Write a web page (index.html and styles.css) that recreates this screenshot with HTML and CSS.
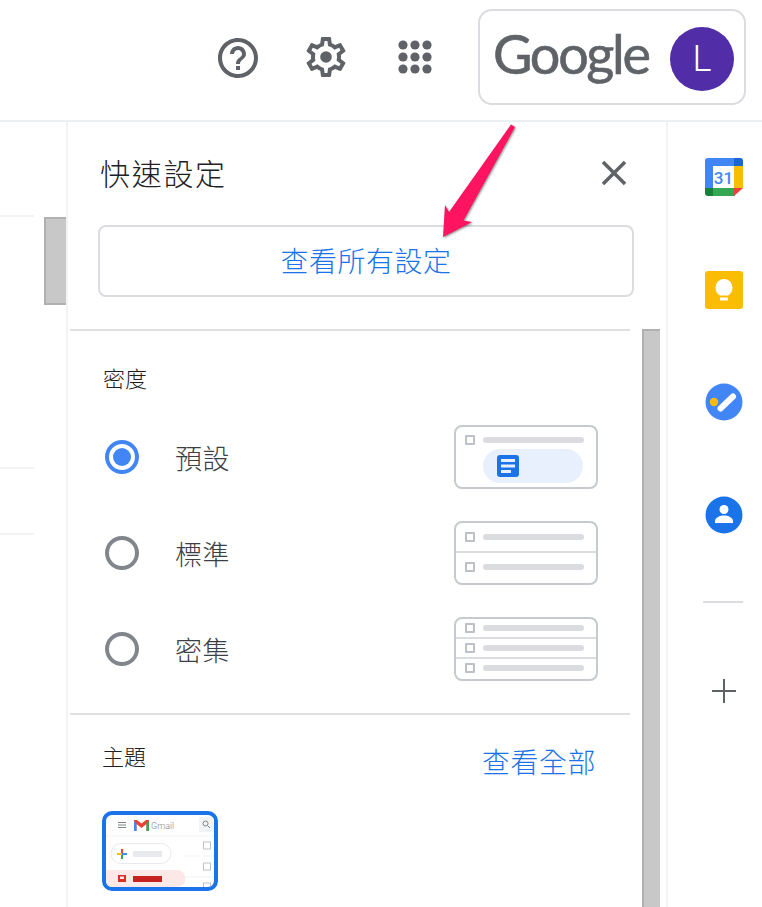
FILE: index.html
```html
<!DOCTYPE html>
<html lang="zh-Hant">
  <head>
    <meta charset="utf-8">
    <title>Gmail 快速設定</title>
    <link rel="stylesheet" href="styles.css">
  </head>

  <body>
    <header class="topbar">
      <svg class="icon-help" viewBox="0 0 24 24"><path d="M11 18h2v-2h-2v2zm1-16C6.48 2 2 6.48 2 12s4.48 10 10 10 10-4.48 10-10S17.52 2 12 2zm0 18c-4.41 0-8-3.59-8-8s3.59-8 8-8 8 3.59 8 8-3.59 8-8 8zm0-14c-2.21 0-4 1.79-4 4h2c0-1.1.9-2 2-2s2 .9 2 2c0 2-3 1.75-3 5h2c0-2.25 3-2.5 3-5 0-2.21-1.79-4-4-4z"/></svg>
      <svg class="icon-gear" viewBox="0 0 24 24"><path d="M19.43 12.98c.04-.32.07-.64.07-.98 0-.34-.03-.66-.07-.98l2.11-1.65c.19-.15.24-.42.12-.64l-2-3.46c-.09-.16-.26-.25-.44-.25-.06 0-.12.01-.17.03l-2.49 1c-.52-.4-1.08-.73-1.69-.98l-.38-2.65C14.46 2.18 14.25 2 14 2h-4c-.25 0-.46.18-.49.42l-.38 2.65c-.61.25-1.17.59-1.69.98l-2.49-1c-.06-.02-.12-.03-.18-.03-.17 0-.34.09-.43.25l-2 3.46c-.13.22-.07.49.12.64l2.11 1.65c-.04.32-.07.65-.07.98 0 .33.03.66.07.98l-2.11 1.65c-.19.15-.24.42-.12.64l2 3.46c.09.16.26.25.44.25.06 0 .12-.01.17-.03l2.49-1c.52.4 1.08.73 1.69.98l.38 2.65c.03.24.24.42.49.42h4c.25 0 .46-.18.49-.42l.38-2.65c.61-.25 1.17-.59 1.69-.98l2.49 1c.06.02.12.03.18.03.17 0 .34-.09.43-.25l2-3.46c.12-.22.07-.49-.12-.64l-2.11-1.65zm-1.98-1.71c.04.31.05.52.05.73 0 .21-.02.43-.05.73l-.14 1.13.89.7 1.08.84-.7 1.21-1.27-.51-1.04-.42-.9.68c-.43.32-.84.56-1.25.73l-1.06.43-.16 1.13-.2 1.35h-1.4l-.19-1.35-.16-1.13-1.06-.43c-.43-.18-.83-.41-1.23-.71l-.91-.7-1.06.43-1.27.51-.7-1.21 1.08-.84.89-.7-.14-1.13c-.03-.31-.05-.54-.05-.74s.02-.43.05-.73l.14-1.13-.89-.7-1.08-.84.7-1.21 1.27.51 1.04.42.9-.68c.43-.32.84-.56 1.25-.73l1.06-.43.16-1.13.2-1.35h1.39l.19 1.35.16 1.13 1.06.43c.43.18.83.41 1.23.71l.91.7 1.06-.43 1.27-.51.7 1.21-1.07.85-.89.7.14 1.13z"/><circle cx="12" cy="12" r="2.9"/></svg>
      <svg class="icon-apps" viewBox="0 0 34 34">
        <circle cx="5" cy="5" r="4.6"/><circle cx="17" cy="5" r="4.6"/><circle cx="29" cy="5" r="4.6"/>
        <circle cx="5" cy="17" r="4.6"/><circle cx="17" cy="17" r="4.6"/><circle cx="29" cy="17" r="4.6"/>
        <circle cx="5" cy="29" r="4.6"/><circle cx="17" cy="29" r="4.6"/><circle cx="29" cy="29" r="4.6"/>
      </svg>
      <div class="account">
        <span class="google-word">Google</span>
        <span class="avatar">L</span>
      </div>
    </header>

    <main class="layout">
      <div class="mail-edge">
        <div class="mail-lines">
          <div class="mail-line first"></div>
          <div class="mail-line second"></div>
          <div class="mail-line third"></div>
        </div>
        <div class="mail-thumb"></div>
      </div>

      <section class="panel">
        <div class="panel-head">
          <div class="panel-title-row">
            <h2 class="panel-title">快速設定</h2>
            <svg class="icon-close" viewBox="0 0 24 24"><path d="M19 6.41 17.59 5 12 10.59 6.41 5 5 6.41 10.59 12 5 17.59 6.41 19 12 13.41 17.59 19 19 17.59 13.41 12z"/></svg>
          </div>
          <button class="all-settings">查看所有設定</button>
        </div>

        <div class="panel-scroll">
          <div class="panel-content">
            <div class="section density">
              <h3 class="section-label">密度</h3>

              <div class="density-row">
                <span class="radio checked"></span>
                <span class="density-name">預設</span>
                <div class="density-thumb">
                  <div class="thumb-row top-row"><span class="check"></span><span class="bar"></span></div>
                  <div class="thumb-pill">
                    <svg class="icon-doc" viewBox="0 0 22 22"><rect width="22" height="22" rx="3" fill="#1a73e8"/><path d="M4 4h14v3H4zM4 9.500h14v3H4zM4 15h10v3H4z" fill="#e8f0fe"/></svg>
                  </div>
                </div>
              </div>

              <div class="density-row">
                <span class="radio"></span>
                <span class="density-name">標準</span>
                <div class="density-thumb">
                  <div class="thumb-row"><span class="check"></span><span class="bar"></span></div>
                  <div class="thumb-row"><span class="check"></span><span class="bar"></span></div>
                </div>
              </div>

              <div class="density-row">
                <span class="radio"></span>
                <span class="density-name">密集</span>
                <div class="density-thumb">
                  <div class="thumb-row"><span class="check"></span><span class="bar"></span></div>
                  <div class="thumb-row"><span class="check"></span><span class="bar"></span></div>
                  <div class="thumb-row"><span class="check"></span><span class="bar"></span></div>
                </div>
              </div>
            </div>

            <div class="section theme">
              <div class="theme-head">
                <h3 class="section-label">主題</h3>
                <span class="view-all">查看全部</span>
              </div>
              <svg class="theme-thumb" viewBox="0 0 108 72">
                <path d="M12 7.500h8M12 10h8M12 12.500h8" stroke="#80868b" stroke-width="1.200" fill="none"/>
                <path d="M28 5h3l4.500 3.500L40 5h3v11h-2.500V9L35.500 13 30.500 9v7H28z" fill="#ea4335"/>
                <path d="M28 6v10h2.500V8z" fill="#4285f4"/>
                <path d="M43 6v10h-2.500V8z" fill="#34a853"/>
                <text class="thumb-word" x="45" y="14">Gmail</text>
                <rect x="93" y="2" width="15" height="15" fill="#f1f3f4"/>
                <circle cx="99.500" cy="8.500" r="2.500" fill="none" stroke="#80868b"/>
                <path d="M101.500 10.500l2.500 2.500" stroke="#80868b"/>
                <path d="M0 21h108" stroke="#f1f3f4"/>
                <rect x="5" y="28.500" width="60" height="20" rx="10" fill="#fff" stroke="#e8eaed"/>
                <path d="M16 34v5" stroke="#ea4335" stroke-width="2"/>
                <path d="M16 39v5" stroke="#34a853" stroke-width="2"/>
                <path d="M11 39h5" stroke="#fbbc04" stroke-width="2"/>
                <path d="M16 39h5" stroke="#4285f4" stroke-width="2"/>
                <rect x="27" y="36" width="29" height="6" fill="#e8eaed"/>
                <path d="M0 55h71a8.500 8.500 0 0 1 0 17H0z" fill="#fce8e6"/>
                <rect x="12" y="60" width="8" height="7" fill="#d93025"/>
                <rect x="14" y="61.500" width="4" height="2.500" fill="#fce8e6"/>
                <rect x="27" y="61" width="29" height="6" fill="#c5221f"/>
                <rect x="97.500" y="27" width="7" height="7" fill="none" stroke="#bdc1c6"/>
                <rect x="97.500" y="48" width="7" height="7" fill="none" stroke="#bdc1c6"/>
                <rect x="97.500" y="68" width="7" height="7" fill="none" stroke="#bdc1c6"/>
                <path d="M78 41h30M78 62h30" stroke="#f1f3f4"/>
              </svg>
            </div>
          </div>
          <div class="panel-scrollbar"></div>
        </div>
      </section>

      <aside class="side-rail">
        <svg class="rail-icon" viewBox="0 0 38 38">
          <path d="M3 0h27v8H8v22H0V3a3 3 0 0 1 3-3z" fill="#4285f4"/>
          <path d="M29 0h6a3 3 0 0 1 3 3v5h-9z" fill="#1967d2"/>
          <rect x="29" y="8" width="9" height="22" fill="#fbbc04"/>
          <rect x="8" y="30" width="22" height="8" fill="#34a853"/>
          <path d="M0 30h8v8H3a3 3 0 0 1-3-3z" fill="#188038"/>
          <path d="M29 30h9l-9 8z" fill="#ea4335"/>
          <rect x="8" y="8" width="21" height="22" fill="#fff"/>
          <text class="cal-day" x="18.500" y="26">31</text>
        </svg>
        <svg class="rail-icon" viewBox="0 0 38 38">
          <rect width="38" height="38" rx="3" fill="#fbbc04"/>
          <path d="M15 24.500c-2.800-1.400-4.500-4.300-4.500-8a8.500 8.500 0 0 1 17 0c0 3.700-1.700 6.600-4.500 8z" fill="#fff"/>
          <rect x="15" y="26.500" width="8" height="3" fill="#fff"/>
        </svg>
        <svg class="rail-icon" viewBox="0 0 38 38">
          <circle cx="19" cy="19" r="18.500" fill="#4285f4"/>
          <path d="M15.500 25.500 28 13.500" stroke="#fff" stroke-width="6" stroke-linecap="round"/>
          <circle cx="9" cy="19" r="4.200" fill="#fbbc04"/>
        </svg>
        <svg class="rail-icon" viewBox="0 0 38 38">
          <circle cx="19" cy="19" r="18.500" fill="#1a73e8"/>
          <circle cx="19" cy="13.500" r="4.500" fill="#fff"/>
          <path d="M10 27v-2c0-3.500 5-5.500 9-5.500s9 2 9 5.500v2z" fill="#fff"/>
        </svg>
        <div class="rail-divider"></div>
        <svg class="icon-plus" viewBox="0 0 24 24"><path d="M0 11h11V0h2v11h11v2H13v11h-2V13H0z"/></svg>
      </aside>
    </main>

    <svg class="arrow" viewBox="0 0 762 907"><path d="M511 124.500 515 127 463.500 220.500 472 222 443 237 445 205 449 212z"/></svg>
  </body>
</html>
```

FILE: styles.css
```css
* {
  box-sizing: border-box;
}
body {
  margin: 0;
  width: 762px;
  height: 907px;
  overflow: hidden;
  position: relative;
  background: white;
  font-family: "Noto Sans CJK TC", "Liberation Sans", sans-serif;
  font-weight: 300;
  color: #3c4043;
}
svg {
  display: block;
  flex: none;
}

/* top bar */
.topbar {
  height: 122px;
  border-bottom: 2px solid #eceff1;
  display: flex;
  align-items: flex-start;
  padding: 9px 16px 0 0;
  justify-content: flex-end;
  fill: #5f6368;
}
.icon-help {
  width: 48px;
  height: 48px;
  margin-top: 25px;
}
.icon-gear {
  width: 48px;
  height: 48px;
  margin: 24px 2px 0 40px;
}
.icon-apps {
  width: 34px;
  height: 34px;
  margin: 31px 0 0 46px;
}
.account {
  width: 268px;
  height: 96px;
  margin-left: 46px;
  border: 2px solid #dadce0;
  border-radius: 14px;
  display: flex;
  align-items: center;
  padding: 4px 10px 0 13px;
  justify-content: space-between;
}
.google-word {
  font-family: "Lato", sans-serif;
  font-size: 54px;
  font-weight: 400;
  letter-spacing: -2.3px;
  -webkit-text-stroke: 0.6px #5f6368;
  color: #5f6368;
  line-height: 1;
  margin-top: -10px;
}
.avatar {
  width: 64px;
  height: 64px;
  border-radius: 50%;
  background: #512da8;
  color: white;
  font-family: "Roboto", sans-serif;
  font-size: 36px;
  font-weight: 300;
  display: flex;
  align-items: center;
  justify-content: center;
}

/* main area */
.layout {
  display: flex;
  height: 785px;
}
.mail-edge {
  width: 68px;
  border-right: 2px solid #f1f3f4;
  display: flex;
}
.mail-lines {
  width: 34px;
}
.mail-line {
  height: 2px;
  background: #f1f3f4;
}
.mail-line.first {
  margin-top: 93px;
}
.mail-line.second {
  margin-top: 250px;
}
.mail-line.third {
  margin-top: 64px;
}
.mail-thumb {
  width: 22px;
  height: 88px;
  margin: 95px 0 0 10px;
  background: #c8c8c8;
  border: 2px solid #b0b0b0;
  border-right: none;
}

/* quick settings panel */
.panel {
  width: 600px;
  border-right: 2px solid #f1f3f4;
  display: flex;
  flex-direction: column;
}
.panel-head {
  height: 207px;
  padding: 0 32px 0 30px;
}
.panel-title-row {
  display: flex;
  align-items: center;
  justify-content: space-between;
  height: 103px;
}
.panel-title {
  margin: -3px 0 0 2px;
  font-size: 30px;
  font-weight: 300;
  letter-spacing: 1.7px;
  color: #202124;
}
.icon-close {
  width: 42px;
  height: 42px;
  margin-right: -1px;
  margin-top: -1px;
  fill: #5f6368;
}
.all-settings {
  display: block;
  width: 536px;
  height: 72px;
  padding: 0 0 2px;
  background: white;
  border: 2px solid #dadce0;
  border-radius: 8px;
  color: #1a73e8;
  font-family: inherit;
  font-weight: 300;
  font-size: 28px;
  letter-spacing: 0.5px;
}
.panel-scroll {
  flex: 1;
  display: flex;
  min-height: 0;
}
.panel-content {
  width: 560px;
  margin-left: 2px;
}
.panel-scrollbar {
  width: 18px;
  margin-left: 12px;
  background: #c8c8c8;
  border-left: 2px solid #b0b0b0;
  border-top: 2px solid #b0b0b0;
}
.section {
  border-top: 2px solid #e0e0e0;
}
.density {
  height: 384px;
  padding: 30px 32px 0 33px;
}
.section-label {
  margin: 0;
  font-size: 22px;
  line-height: 32px;
  font-weight: 300;
  color: #202124;
}
.density-row {
  display: flex;
  align-items: center;
  height: 64px;
  margin-bottom: 32px;
}
.section-label + .density-row {
  margin-top: 32px;
}
.radio {
  width: 34px;
  height: 34px;
  border-radius: 50%;
  border: 4px solid #80868b;
  margin-left: 2px;
  display: flex;
  align-items: center;
  justify-content: center;
}
.radio.checked {
  border-color: #4285f4;
}
.radio.checked::after {
  content: "";
  width: 18px;
  height: 18px;
  border-radius: 50%;
  background: #4285f4;
}
.density-name {
  margin-left: 36px;
  font-size: 27px;
  letter-spacing: 0.5px;
  width: 280px;
}
.density-thumb {
  width: 144px;
  height: 64px;
  border: 2px solid #c6c9ce;
  border-radius: 8px;
  display: flex;
  flex-direction: column;
}
.thumb-row {
  flex: 1;
  display: flex;
  align-items: center;
  padding: 0 12px 0 9px;
  border-top: 2px solid #dadce0;
}
.thumb-row:first-child {
  border-top: none;
}
.thumb-row:last-child {
  padding-bottom: 2px;
}
.thumb-row.top-row {
  flex: none;
  height: 22px;
  padding-top: 4px;
}
.check {
  width: 10px;
  height: 10px;
  border: 2px solid #bdc1c6;
  border-radius: 1px;
}
.bar {
  flex: 1;
  height: 6px;
  margin-left: 8px;
  border-radius: 3px;
  background: #dadce0;
}
.thumb-pill {
  width: 100px;
  height: 34px;
  margin-left: 27px;
  border-radius: 17px;
  background: #e8f0fe;
  display: flex;
  align-items: center;
  padding-left: 14px;
}
.icon-doc {
  width: 22px;
  height: 22px;
}
.theme {
  padding: 24px 34px 0 32px;
}
.theme-head {
  display: flex;
  justify-content: space-between;
}
.view-all {
  color: #1a73e8;
  font-size: 28px;
  line-height: 40px;
  letter-spacing: 0.5px;
  margin-top: 2px;
}
.theme-thumb {
  width: 116px;
  height: 80px;
  margin-top: 30px;
  border: 4px solid #1a73e8;
  border-radius: 10px;
  background: white;
  overflow: hidden;
}
.thumb-word {
  font-family: "Roboto", sans-serif;
  font-size: 9px;
  fill: #80868b;
}

/* right rail */
.side-rail {
  flex: 1;
  display: flex;
  flex-direction: column;
  padding: 36px 0 0 37px;
}
.rail-icon {
  width: 38px;
  height: 38px;
  margin-bottom: 74.5px;
}
.rail-divider {
  width: 40px;
  height: 2px;
  margin: -7px 0 0 -2px;
  background: #dadce0;
}
.icon-plus {
  width: 24px;
  height: 24px;
  margin: 76px 0 0 7px;
  fill: #5f6368;
}

/* annotation arrow over the page */
.arrow {
  position: absolute;
  left: 0;
  top: 0;
  width: 762px;
  height: 907px;
  fill: #ff1461;
  filter: drop-shadow(1px 1px 1px rgba(0, 0, 0, 0.45));
  pointer-events: none;
}
.cal-day {
  font-family: "Roboto", sans-serif;
  font-size: 17px;
  font-weight: 500;
  fill: #4285f4;
  text-anchor: middle;
}
```
